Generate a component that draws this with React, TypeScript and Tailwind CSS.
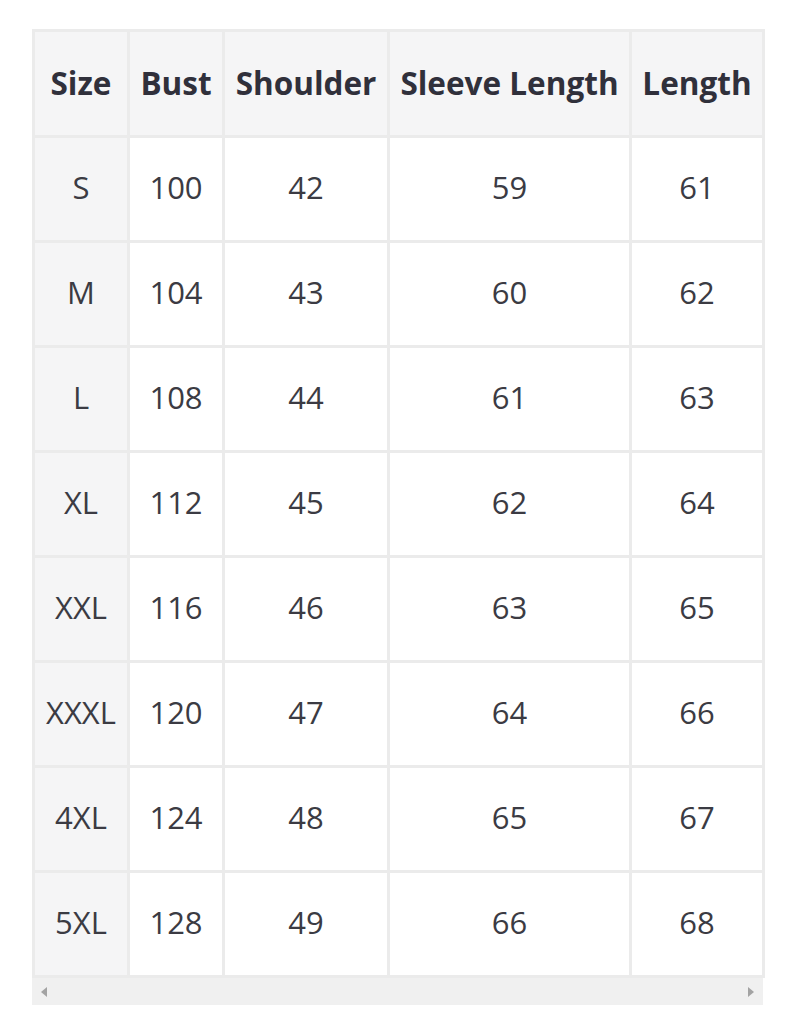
import React from "react";

const rows = [
  ["S", "100", "42", "59", "61"],
  ["M", "104", "43", "60", "62"],
  ["L", "108", "44", "61", "63"],
  ["XL", "112", "45", "62", "64"],
  ["XXL", "116", "46", "63", "65"],
  ["XXXL", "120", "47", "64", "66"],
  ["4XL", "124", "48", "65", "67"],
  ["5XL", "128", "49", "66", "68"],
];

const headers = ["Size", "Bust", "Shoulder", "Sleeve Length", "Length"];
const widths = ["w-[95px]", "w-[95px]", "w-[165px]", "w-[242px]", "w-[133px]"];

export default function App() {
  return (
    <div
      className="bg-white w-[800px] h-[1009px] pt-[29px] pl-[32px]"
      style={{ fontFamily: '"Open Sans", "Noto Sans", sans-serif' }}
    >
      <div className="w-[731px]">
        <table className="border-collapse table-fixed w-[731px]">
          <thead>
            <tr className="h-[106px]">
              {headers.map((h, i) => (
                <th
                  key={h}
                  className={`${widths[i]} border-[3px] border-[#ebebeb] bg-[#f5f5f6] text-[31.5px] font-bold text-[#30303b] text-center px-0 pb-[2px] whitespace-nowrap`}
                >
                  {h}
                </th>
              ))}
            </tr>
          </thead>
          <tbody>
            {rows.map((r) => (
              <tr key={r[0]} className="h-[105px]">
                {r.map((c, i) => (
                  <td
                    key={i}
                    className={`border-[3px] border-[#ebebeb] text-[31px] text-[#3b3b43] text-center pb-[3px] whitespace-nowrap ${
                      i === 0 ? "bg-[#f5f5f6]" : "bg-white"
                    }`}
                  >
                    {c}
                  </td>
                ))}
              </tr>
            ))}
          </tbody>
        </table>
        <div className="h-[27px] bg-[#f0f0f0] flex items-center justify-between px-[9px]">
          <svg width="7" height="10" viewBox="0 0 7 10">
            <polygon points="6,0 6,10 0,5" fill="#a3a3a3" />
          </svg>
          <svg width="7" height="10" viewBox="0 0 7 10">
            <polygon points="1,0 1,10 7,5" fill="#a3a3a3" />
          </svg>
        </div>
      </div>
    </div>
  );
}
